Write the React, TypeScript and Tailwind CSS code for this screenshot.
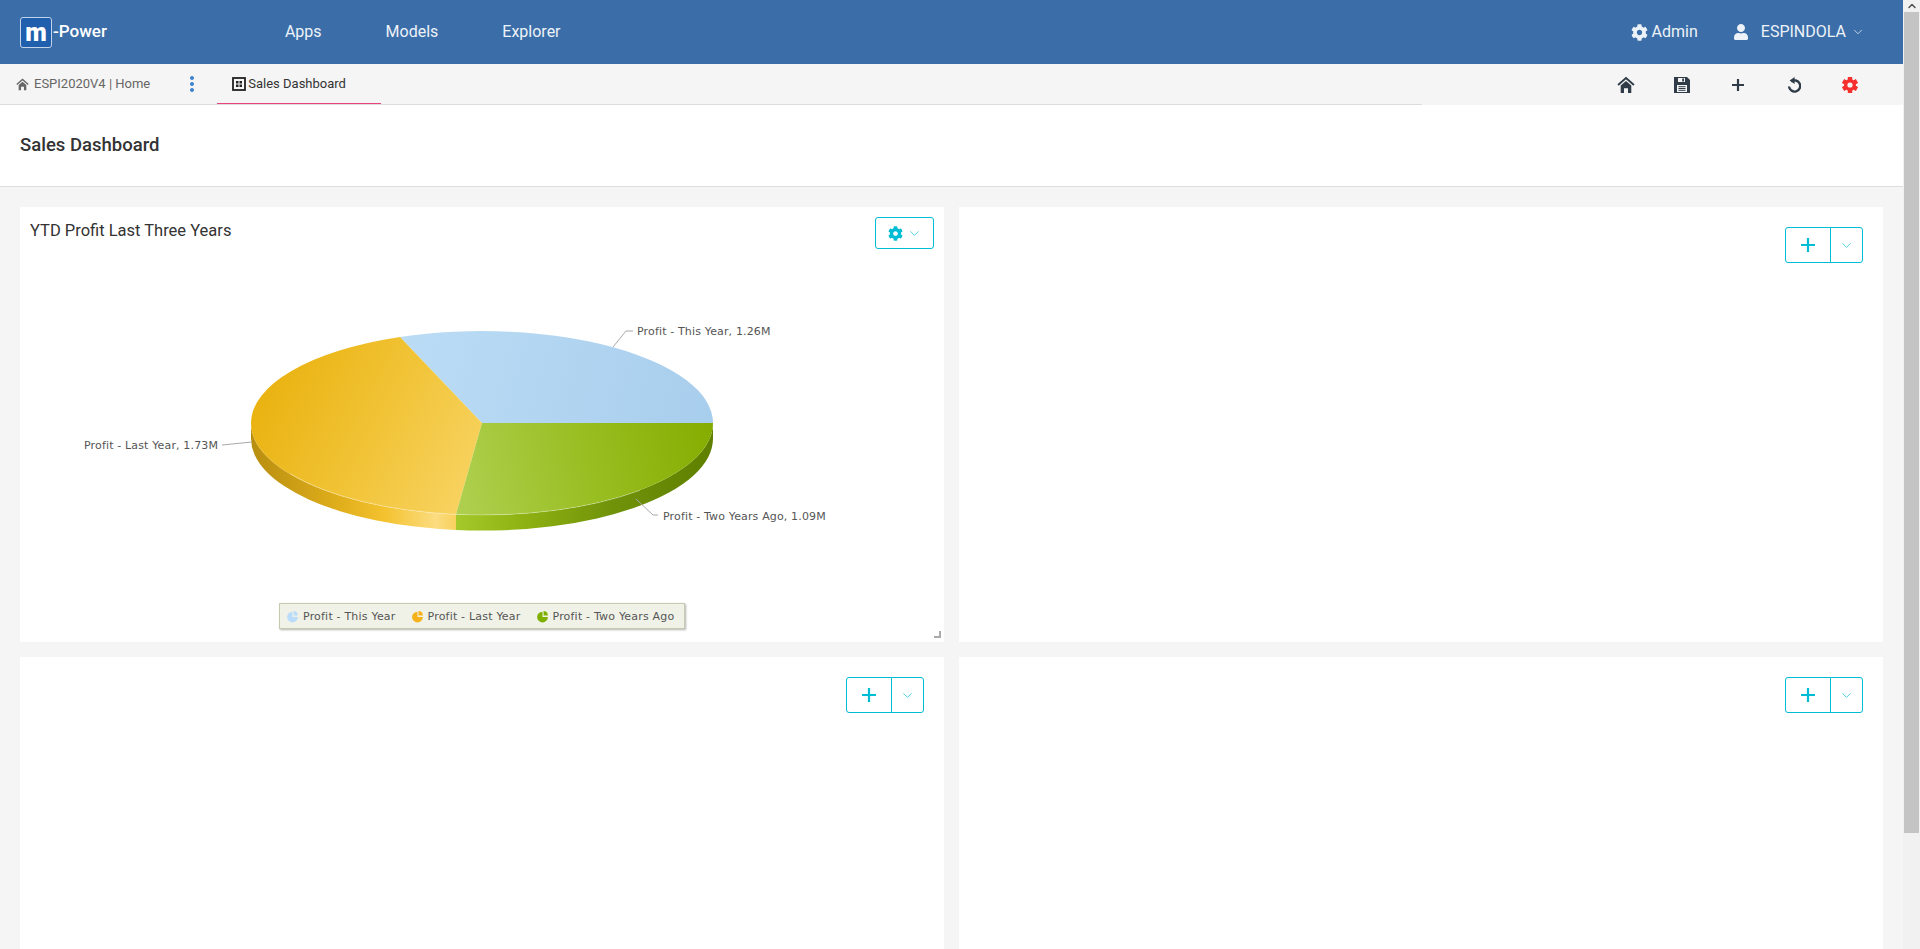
import { FaCog, FaUser } from "react-icons/fa";
import { MdMoreVert } from "react-icons/md";
import { LuChevronDown, LuChevronUp } from "react-icons/lu";

function TableIcon() {
  return (
    <svg width="14" height="14" viewBox="0 0 14 14" className="shrink-0">
      <rect x="1" y="1" width="12" height="12" fill="none" stroke="#222" strokeWidth="1.8" />
      <path d="M4 4h2.5v2.5H4zM7.5 4H10v2.5H7.5zM4 7.5h2.5V10H4zM7.5 7.5H10V10H7.5z" fill="#222" />
    </svg>
  );
}

function HomeIcon({ size }: { size: number }) {
  return (
    <svg width={size} height={size} viewBox="0 0 17 17" fill="currentColor">
      <path d="M1 8.5L8.5 2L16 8.5" fill="none" stroke="currentColor" strokeWidth="1.8" />
      <path d="M3.5 9L8.5 4.8L13.5 9V16H10.4V11.5H6.6V16H3.5Z" />
    </svg>
  );
}

function SaveIcon() {
  return (
    <svg width="16" height="16" viewBox="0 0 16 16">
      <path d="M0 0H13L16 3V16H0Z" fill="#2f3c48" />
      <rect x="4" y="1" width="7" height="4" fill="#f5f5f5" />
      <rect x="8.2" y="1.5" width="1.8" height="3" fill="#2f3c48" />
      <rect x="3" y="8" width="10" height="7" fill="#f5f5f5" />
      <path d="M4.5 9.7H11.5M4.5 11.5H11.5M4.5 13.3H11.5" stroke="#2f3c48" />
    </svg>
  );
}

function PlusIcon({ size, weight }: { size: number; weight: number }) {
  return (
    <svg width={size} height={size} viewBox="0 0 12 12" fill="none" stroke="currentColor" strokeWidth={weight}>
      <path d="M6 0V12M0 6H12" />
    </svg>
  );
}

function UndoIcon() {
  return (
    <svg width="14" height="16" viewBox="0 0 14 16" fill="none">
      <path d="M4.2 4.5A5.6 5.6 0 1 1 2 9.5" stroke="currentColor" strokeWidth="2.4" />
      <path d="M7.6 0V7L2.6 3.5Z" fill="currentColor" />
    </svg>
  );
}

function RedGear() {
  const tooth = "M5.8 0H10.2V3H5.8ZM5.8 13H10.2V16H5.8Z";
  return (
    <svg width="16" height="16" viewBox="0 0 16 16" fill="#f5302e">
      <path d={tooth} />
      <path d={tooth} transform="rotate(60 8 8)" />
      <path d={tooth} transform="rotate(120 8 8)" />
      <circle cx="8" cy="8" r="4.3" fill="none" stroke="#f5302e" strokeWidth="3.4" />
    </svg>
  );
}

function AddButton() {
  return (
    <div className="flex h-[36px] w-[78px] rounded-[3px] border border-[#00bcd4] bg-white">
      <div className="flex w-[45px] items-center justify-center border-r border-[#00bcd4] text-[#00bcd4]">
        <PlusIcon size={14} weight={1.9} />
      </div>
      <div className="flex flex-1 items-center justify-center">
        <LuChevronDown className="text-[15px] text-[#00bcd4]" strokeWidth={1.1} />
      </div>
    </div>
  );
}

function EmptyCard() {
  return (
    <div className="flex h-[435px] justify-end bg-white p-5">
      <AddButton />
    </div>
  );
}

function PieChart() {
  return (
    <svg width="924" height="330" viewBox="20 267 924 330" className="block font-['DejaVu_Sans',sans-serif]">
      <defs>
        <linearGradient id="blueTop" gradientUnits="userSpaceOnUse" x1="400" y1="340" x2="713" y2="423">
          <stop offset="0" stopColor="#bbdcf5" />
          <stop offset="1" stopColor="#a8ceed" />
        </linearGradient>
        <linearGradient id="yellowTop" gradientUnits="userSpaceOnUse" x1="251" y1="400" x2="470" y2="515">
          <stop offset="0" stopColor="#e9b20f" />
          <stop offset="0.5" stopColor="#f1c336" />
          <stop offset="1" stopColor="#f8d464" />
        </linearGradient>
        <linearGradient id="greenTop" gradientUnits="userSpaceOnUse" x1="456" y1="480" x2="713" y2="423">
          <stop offset="0" stopColor="#aecf4e" />
          <stop offset="0.5" stopColor="#99be22" />
          <stop offset="1" stopColor="#85ad00" />
        </linearGradient>
        <linearGradient id="yellowSide" gradientUnits="userSpaceOnUse" x1="251" y1="0" x2="456" y2="0">
          <stop offset="0" stopColor="#b88e10" />
          <stop offset="0.45" stopColor="#e2b01c" />
          <stop offset="0.65" stopColor="#f4c22e" />
          <stop offset="0.9" stopColor="#fbdc80" />
          <stop offset="1" stopColor="#f8d25e" />
        </linearGradient>
        <linearGradient id="greenSide" gradientUnits="userSpaceOnUse" x1="456" y1="0" x2="713" y2="0">
          <stop offset="0" stopColor="#a5c92a" />
          <stop offset="0.25" stopColor="#8fb312" />
          <stop offset="0.6" stopColor="#71930a" />
          <stop offset="1" stopColor="#5f7f00" />
        </linearGradient>
      </defs>

      <path d="M251 423A231 92 0 0 0 456 514.4L456 530A231 92 0 0 1 251 438Z" fill="url(#yellowSide)" />
      <path d="M456 514.4A231 92 0 0 0 713 423L713 438A231 92 0 0 1 456 530Z" fill="url(#greenSide)" />
      <path d="M482 423L400 337A231 92 0 0 1 713 423Z" fill="url(#blueTop)" />
      <path d="M482 423L456 514.4A231 92 0 0 1 251 423A231 92 0 0 1 400 337Z" fill="url(#yellowTop)" />
      <path d="M482 423L713 423A231 92 0 0 1 456 514.4Z" fill="url(#greenTop)" />
      <path d="M290 473.6A231 92 0 0 0 640 490.4" fill="none" stroke="#fff" strokeOpacity="0.3" />

      <g fill="none" stroke="#a8a8a8">
        <path d="M613 347L626 331H633" />
        <path d="M222 445L252 442" />
        <path d="M636 499L653 515H658" />
      </g>
      <g fontSize="11" fill="#555" letterSpacing="0.15">
        <text x="637" y="335">Profit - This Year, 1.26M</text>
        <text x="84" y="449">Profit - Last Year, 1.73M</text>
        <text x="663" y="520">Profit - Two Years Ago, 1.09M</text>
      </g>
    </svg>
  );
}

function LegendItem({ color, label }: { color: string; label: string }) {
  return (
    <div className="flex items-center gap-[4px]">
      <svg width="13" height="13" viewBox="0 0 12 12" className="-mt-[2px]">
        <path d="M6 6.5H11A5 5 0 1 1 6 1.5Z" fill={color} />
        <path d="M7 5V1A4 4 0 0 1 11 5Z" fill={color} />
      </svg>
      <span>{label}</span>
    </div>
  );
}

function ChartCard() {
  return (
    <div className="relative h-[435px] bg-white">
      <div className="flex h-[60px] items-start justify-between pt-[10px] pr-[10px] pl-[10px]">
        <h2 className="pt-px text-[16.5px] leading-[26px] text-[#333]">YTD Profit Last Three Years</h2>
        <div className="flex h-[32px] w-[59px] items-center justify-center gap-[4px] rounded-[3px] border border-[#00bcd4]">
          <FaCog className="text-[15px] text-[#00bcd4]" />
          <LuChevronDown className="text-[15px] text-[#00bcd4]" strokeWidth={1.1} />
        </div>
      </div>
      <PieChart />
      <div className="mx-auto mt-[6px] flex h-[26px] w-[406px] items-center gap-[15px] border border-[#c8cab0] bg-[#f0f2e8] pt-[2px] pl-[6px] font-['DejaVu_Sans',sans-serif] text-[11px] tracking-[0.2px] text-[#555] shadow-[1px_1px_2px_rgba(0,0,0,0.3)]">
        <LegendItem color="#bbdcf8" label="Profit - This Year" />
        <LegendItem color="#f5b21a" label="Profit - Last Year" />
        <LegendItem color="#7fb000" label="Profit - Two Years Ago" />
      </div>
      <svg width="7" height="7" viewBox="0 0 7 7" className="absolute right-[3px] bottom-[4px]">
        <path d="M5 0h2v7H0V5h5z" fill="#aaa" />
      </svg>
    </div>
  );
}

function Scrollbar() {
  return (
    <div className="flex w-[17px] shrink-0 flex-col bg-[#f1f1f1] pl-px">
      <div className="flex h-[12px] items-center justify-center">
        <LuChevronUp className="text-[12px] text-[#505050]" strokeWidth={3} />
      </div>
      <div className="h-[821px] w-[15px] bg-[#c4c4c4]" />
    </div>
  );
}

export default function App() {
  return (
    <div className="flex h-screen overflow-hidden bg-[#f5f5f5] font-['Roboto',sans-serif]">
      <div className="min-w-0 flex-1">
        {/* Top nav */}
        <header className="flex h-[64px] items-center bg-[#3b6ea8] text-[16px] text-[#edf2f8]">
          <div className="ml-5 flex items-center">
            <div className="flex h-[31px] w-[32px] items-center justify-center rounded-[3px] border border-[#c3d4e8] bg-[#1f5fae] text-[25px] leading-none font-black text-white">
              m
            </div>
            <span className="ml-[1px] text-[17px] font-medium text-white">-Power</span>
          </div>
          <nav className="ml-[178px] flex gap-[64px]">
            <span>Apps</span>
            <span>Models</span>
            <span>Explorer</span>
          </nav>
          <div className="ml-auto flex items-center pr-[38px]">
            <FaCog className="text-[17px]" />
            <span className="ml-[4px]">Admin</span>
            <FaUser className="ml-[35px] text-[16px]" />
            <span className="ml-[12px]">ESPINDOLA</span>
            <LuChevronDown className="ml-[5px] text-[14px]" strokeWidth={1.25} />
          </div>
        </header>

        {/* Tab bar */}
        <div className="flex h-[41px] bg-[#f5f5f5]">
          <div className="flex w-[1422px] border-b border-[#dddddd]">
            <div className="flex items-center pl-4 text-[13px] text-[#666]">
              <HomeIcon size={13} />
              <span className="ml-[5px]">ESPI2020V4 | Home</span>
            </div>
            <div className="ml-[30px] flex items-center">
              <MdMoreVert className="text-[24px] text-[#3b82d0]" />
            </div>
            <div className="ml-[13px] flex h-[40px] w-[164px] items-center gap-[2px] border-b border-[#e8447a] pl-[15px] text-[13px] text-[#333]">
              <TableIcon />
              <span>Sales Dashboard</span>
            </div>
          </div>
          <div className="flex flex-1 items-center text-[#2f3c48]">
            <div className="ml-[193px] flex w-[22px] justify-center">
              <HomeIcon size={18} />
            </div>
            <div className="ml-[34px] flex w-[22px] justify-center">
              <SaveIcon />
            </div>
            <div className="ml-[34px] flex w-[22px] justify-center">
              <PlusIcon size={12} weight={2.2} />
            </div>
            <div className="ml-[34px] flex w-[22px] justify-center">
              <UndoIcon />
            </div>
            <div className="ml-[34px] flex w-[22px] justify-center">
              <RedGear />
            </div>
          </div>
        </div>

        {/* Page title */}
        <div className="flex h-[82px] items-center border-b border-[#dddddd] bg-white pt-px pl-5">
          <h1 className="text-[18.5px] font-medium text-[#333]">Sales Dashboard</h1>
        </div>

        {/* Dashboard cards */}
        <div className="grid grid-cols-2 gap-[15px] px-5 pt-5">
          <ChartCard />
          <EmptyCard />
          <EmptyCard />
          <EmptyCard />
        </div>
      </div>
      <Scrollbar />
    </div>
  );
}
